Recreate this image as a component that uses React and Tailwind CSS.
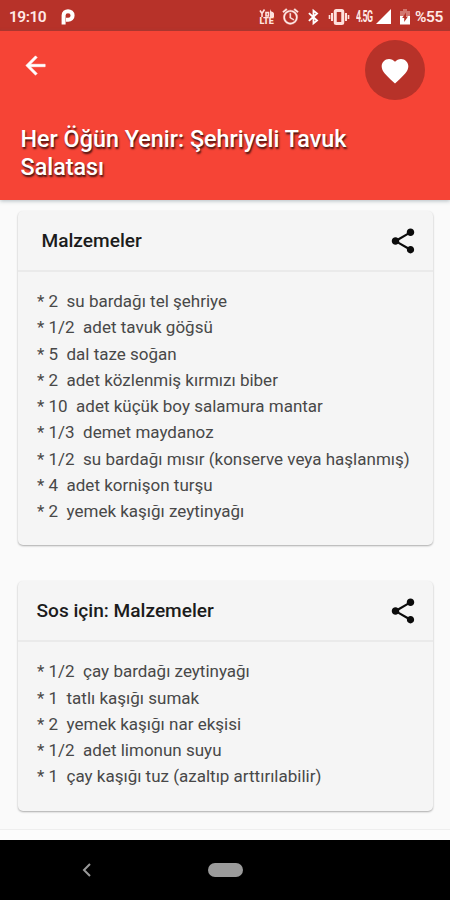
import React from "react";

const ingredients = [
  "* 2  su bardağı tel şehriye",
  "* 1/2  adet tavuk göğsü",
  "* 5  dal taze soğan",
  "* 2  adet közlenmiş kırmızı biber",
  "* 10  adet küçük boy salamura mantar",
  "* 1/3  demet maydanoz",
  "* 1/2  su bardağı mısır (konserve veya haşlanmış)",
  "* 4  adet kornişon turşu",
  "* 2  yemek kaşığı zeytinyağı",
];

const sauce = [
  "* 1/2  çay bardağı zeytinyağı",
  "* 1  tatlı kaşığı sumak",
  "* 2  yemek kaşığı nar ekşisi",
  "* 1/2  adet limonun suyu",
  "* 1  çay kaşığı tuz (azaltıp arttırılabilir)",
];

function StatusBar() {
  return (
    <div className="flex h-[31px] shrink-0 items-center bg-[#b73229] pt-[2px] pr-[7px] pl-[9px] text-white">
      <span className="w-[52px] text-[15.500px] leading-5 font-semibold tracking-[-0.500px] text-[#ffe9e6]">19:10</span>
      <svg className="h-[16px] w-[14px]" viewBox="0 0 14 16" fill="none" stroke="#fff">
        <path d="M2.600 15.500V6.200C2.600 3.700 4.500 2.200 7 2.200s4.600 1.500 4.600 4.200-1.900 4.300-4.400 4.300H5" strokeWidth="4" />
      </svg>
      <div className="ml-auto flex items-center">
        <div className="flex w-[17px] flex-col items-center text-[#ffe1de]">
          <svg className="h-[8px] w-[16px]" viewBox="0 0 16 8" fill="none" stroke="currentColor" strokeWidth="1.600">
            <path d="M1 1.500l2 3 2.500-4M3 4v4M7 3.500h2.500V7H7z" />
            <path d="M11 0c.5 2 1.500 3 3 3l1 1.500V8h-4V4z" fill="currentColor" stroke="none" />
          </svg>
          <span className="text-[9px] leading-[8px] font-black tracking-[-0.3px]">LTE</span>
        </div>
        <svg className="ml-[6px] h-[19px] w-[19px]" viewBox="0 0 24 24" fill="#ffe9e6" stroke="#ffe9e6" strokeWidth=".4">
          <path d="M22 5.720l-4.600-3.860-1.290 1.530 4.600 3.860L22 5.720zM7.880 3.390L6.600 1.860 2 5.710l1.290 1.530 4.590-3.850zM12.500 8H11v6l4.750 2.850.75-1.230-4-2.370V8zM12 4c-4.970 0-9 4.030-9 9s4.020 9 9 9a9 9 0 1 0 0-18zm0 16c-3.870 0-7-3.130-7-7s3.130-7 7-7 7 3.130 7 7-3.130 7-7 7z" />
        </svg>
        <svg className="ml-[5px] h-[18px] w-[17px]" viewBox="0 0 24 24" fill="none" stroke="#fff" strokeWidth="2.600">
          <path d="M5.500 6.500L17 17l-5 4V3l5 4L5.500 17.500" />
        </svg>
        <svg className="ml-[6px] h-[18px] w-[22px]" viewBox="0 0 22 18" fill="none" stroke="#ffe1de">
          <rect x="7.250" y="2.500" width="7.500" height="13" rx="1" strokeWidth="3" />
          <path d="M4 5v8M18 5v8" strokeWidth="2" />
          <path d="M1.500 7v4M20.500 7v4" strokeWidth="1.600" />
        </svg>
        <span className="ml-[6px] w-[16px] text-[16px] leading-5 font-bold tracking-[-1px] whitespace-nowrap text-[#ffe9e6]">
          <span className="inline-block origin-left scale-x-[0.550]">4.5G</span>
        </span>
        <svg className="ml-[4px] h-[15px] w-[15px]" viewBox="0 0 15 15" fill="#fff">
          <path d="M15 0v15H0z" />
        </svg>
        <svg className="ml-[9px] h-[17px] w-[10px]" viewBox="0 0 10 17">
          <path d="M3 1h4v2h3v5H0V3h3z" fill="#e9b1ac" opacity=".55" />
          <path d="M0 8h10v8.500H0z" fill="#fff" />
          <path d="M6 4.500L2.200 10h2v4L8 8.500H6z" fill="#b73229" />
        </svg>
        <span className="ml-[5px] w-[28px] text-[15.500px] leading-5 font-semibold tracking-[-0.4px] whitespace-nowrap text-[#ffe9e6]">%55</span>
      </div>
    </div>
  );
}

function Header() {
  return (
    <header className="z-10 h-[169px] shrink-0 bg-[#f64436] text-white shadow-[0_1px_4px_rgba(70,95,105,0.4)]">
      <div className="flex items-start justify-between pt-[9px] pr-[25px] pl-[21px]">
        <svg className="mt-[11px] h-[29px] w-[29px]" viewBox="0 0 24 24" fill="#fff" stroke="#fff" strokeWidth=".5">
          <path d="M20 11H7.830l5.590-5.590L12 4l-8 8 8 8 1.410-1.410L7.830 13H20v-2z" />
        </svg>
        <div className="flex size-[60px] items-center justify-center rounded-full bg-[#b73229]">
          <svg className="mt-[1px] h-[32px] w-[32px]" viewBox="0 0 24 24" fill="#fff">
            <path d="M12 21.350l-1.450-1.320C5.400 15.360 2 12.280 2 8.500 2 5.420 4.420 3 7.500 3c1.740 0 3.410.81 4.500 2.090C13.090 3.810 14.760 3 16.500 3 19.580 3 22 5.420 22 8.500c0 3.780-3.400 6.860-8.550 11.540L12 21.350z" />
          </svg>
        </div>
      </div>
      <h1 className="mt-[25px] pl-[20.500px] text-[23.350px] leading-[28px] font-medium [text-shadow:1px_2px_2px_rgba(0,0,0,0.75)]">
        Her Öğün Yenir: Şehriyeli Tavuk
        <br />
        Salatası
      </h1>
    </header>
  );
}

function ShareIcon() {
  return (
    <svg className="h-[30px] w-[30px]" viewBox="0 0 24 24" fill="#0b0b0b">
      <path d="M18 16.080c-.76 0-1.440.3-1.960.77L8.910 12.700c.05-.23.09-.46.09-.7s-.04-.47-.09-.7l7.050-4.110c.54.5 1.250.81 2.040.81 1.660 0 3-1.340 3-3s-1.340-3-3-3-3 1.340-3 3c0 .24.04.47.09.7L8.040 9.810C7.500 9.310 6.790 9 6 9c-1.660 0-3 1.340-3 3s1.340 3 3 3c.79 0 1.500-.31 2.040-.81l7.120 4.160c-.05.21-.08.43-.08.65 0 1.610 1.310 2.920 2.920 2.920s2.920-1.310 2.920-2.920-1.310-2.920-2.920-2.920z" />
    </svg>
  );
}

function Card({ title, lines, indent }) {
  return (
    <section className="rounded-[5px] bg-[#f5f5f5] pb-[21px] shadow-[0_1px_2px_rgba(0,0,0,0.32)]">
      <div className="flex h-[61px] items-center justify-between border-b-2 border-[#eaeaea] pt-px pr-[15px]">
        <h2 className={`${indent} text-[19.100px] leading-6 font-medium text-[#1c1c1c]`}>{title}</h2>
        <ShareIcon />
      </div>
      <ul className="pt-[16px] pl-[19px] text-[17px] leading-[26.250px] text-[#484848]">
        {lines.map((line) => (
          <li key={line} className="whitespace-pre">{line}</li>
        ))}
      </ul>
    </section>
  );
}

export default function App() {
  return (
    <div className="flex h-[900px] w-[450px] flex-col overflow-hidden bg-[#fafafa] font-['Roboto',sans-serif]">
      <StatusBar />
      <Header />
      <main className="flex h-[629px] shrink-0 flex-col gap-[36px] pt-[11px] pr-[17px] pl-[18px]">
        <Card title="Malzemeler" lines={ingredients} indent="pl-[23.500px]" />
        <Card title="Sos için: Malzemeler" lines={sauce} indent="pl-[18.500px]" />
      </main>
      <div className="h-[11px] shrink-0 border-t border-[#eeeeee] bg-[#fcfcfc]" />
      <nav className="flex flex-1 items-center bg-black pl-[82px]">
        <svg className="h-[14px] w-[9px]" viewBox="0 0 9 14" fill="none" stroke="#999" strokeWidth="2">
          <path d="M8 1L2 7l6 6" />
        </svg>
        <div className="ml-[117px] h-[14px] w-[35px] rounded-full bg-[#9b9b9b]" />
      </nav>
    </div>
  );
}
